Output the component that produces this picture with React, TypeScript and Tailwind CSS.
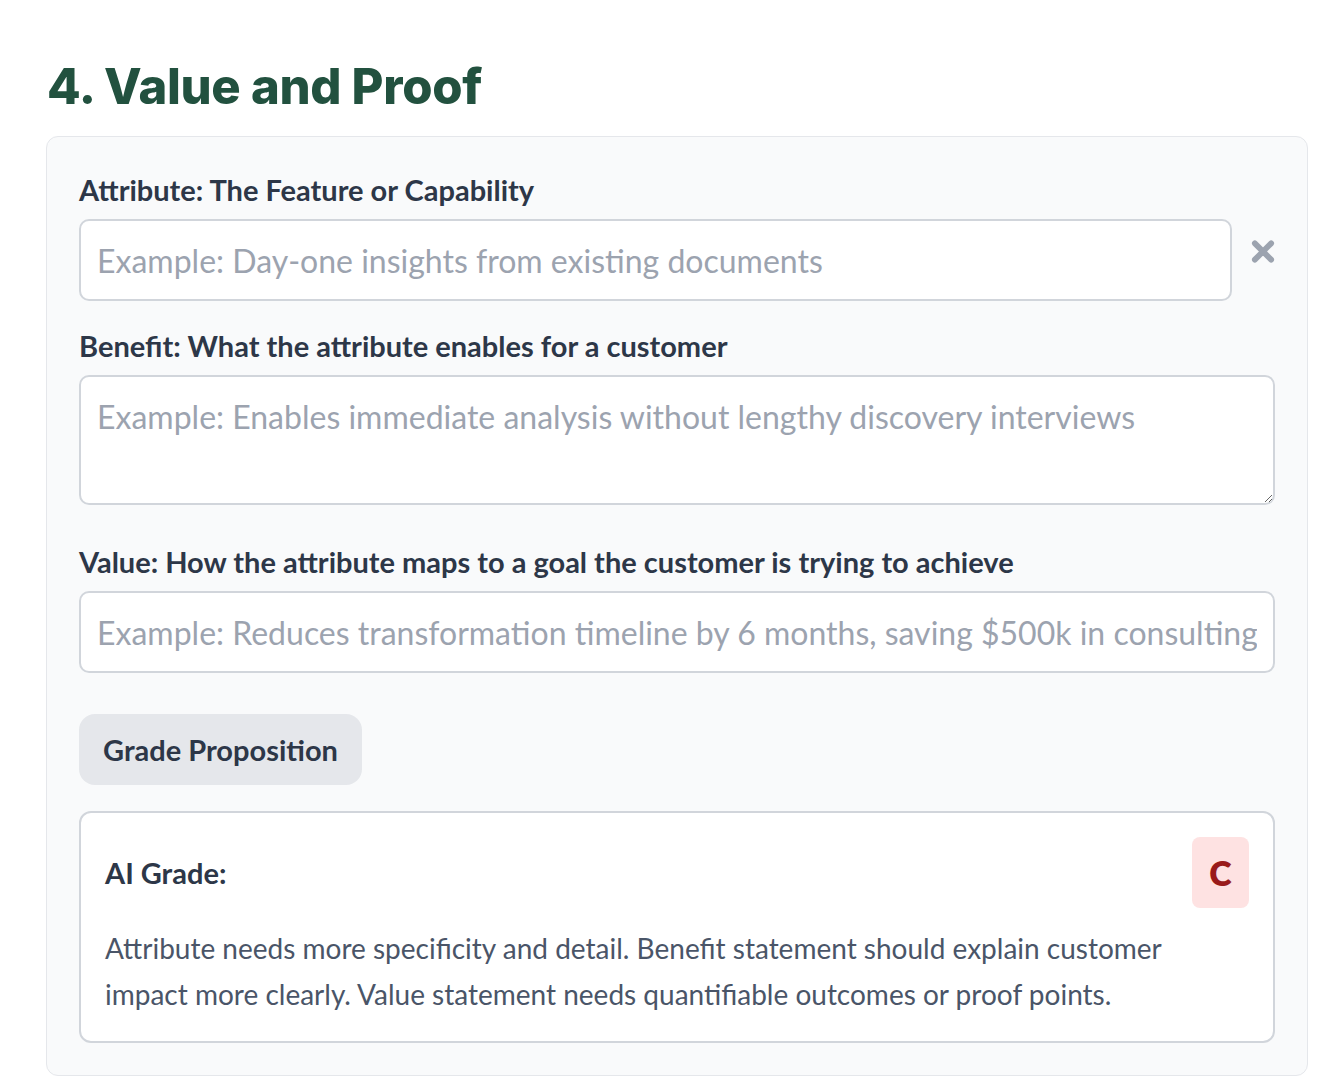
import React from 'react';

const body = { fontFamily: 'Lato, "Open Sans", sans-serif' };
const head = { fontFamily: 'Inter, "Liberation Sans", sans-serif' };

function XIcon() {
  return (
    <svg width="25" height="25" viewBox="0 0 25 25" fill="none">
      <path d="M4 4 L21 21 M21 4 L4 21" stroke="#9ca3af" strokeWidth="6" strokeLinecap="round" />
    </svg>
  );
}

export default function App() {
  return (
    <div className="min-h-screen bg-white pl-[46px] pr-[22px] pt-[55px]" style={body}>
      <h2 className="text-[49px] leading-[64px] font-extrabold text-[#22513f] mb-[17px] pl-[1px] tracking-[-0.3px]" style={head}>
        4. Value and Proof
      </h2>

      <div className="rounded-[12px] border border-[#e5e7eb] bg-[#f9fafb] px-8 pt-[33px] pb-8">
        <div className="text-[29px] leading-[40px] font-bold text-[#2d3748] mb-[9px]">
          Attribute: The Feature or Capability
        </div>
        <div className="flex items-start gap-[19px]">
          <input
            className="flex-1 h-[82px] rounded-[10px] border-2 border-[#d1d5db] bg-white px-[16px] text-[32px] text-[#2d3748] placeholder:text-[#9ca3af] outline-none"
            placeholder="Example: Day-one insights from existing documents"
          />
          <button className="mt-[20px] w-[24px] h-[25px] flex items-center justify-center">
            <XIcon />
          </button>
        </div>

        <div className="text-[29px] leading-[40px] font-bold text-[#2d3748] mt-[25px] mb-[9px]">
          Benefit: What the attribute enables for a customer
        </div>
        <textarea
          className="block w-full h-[130px] rounded-[10px] border-2 border-[#d1d5db] bg-white px-[16px] py-[18px] text-[32px] leading-[44px] text-[#2d3748] placeholder:text-[#9ca3af] outline-none"
          placeholder="Example: Enables immediate analysis without lengthy discovery interviews"
        />

        <div className="text-[29px] leading-[40px] font-bold text-[#2d3748] mt-[37px] mb-[9px]">
          Value: How the attribute maps to a goal the customer is trying to achieve
        </div>
        <input
          className="block w-full h-[82px] rounded-[10px] border-2 border-[#d1d5db] bg-white px-[16px] text-[32px] text-[#2d3748] placeholder:text-[#9ca3af] outline-none"
          placeholder="Example: Reduces transformation timeline by 6 months, saving $500k in consulting fees"
        />

        <button className="mt-[41px] h-[71px] w-[283px] rounded-[16px] bg-[#e5e7eb] text-[29px] font-bold text-[#2d3748]">
          Grade Proposition
        </button>

        <div className="mt-[26px] rounded-[12px] border-2 border-[#d1d5db] bg-white p-6">
          <div className="flex items-center justify-between">
            <div className="text-[29px] font-bold text-[#2d3748]">AI Grade:</div>
            <div className="w-[57px] h-[71px] rounded-[8px] bg-[#fee2e2] flex items-center justify-center text-[34px] font-extrabold text-[#991b1b]">
              C
            </div>
          </div>
          <p className="mt-[17px] text-[28px] leading-[46px] text-[#4a5568] max-w-[1090px]">
            Attribute needs more specificity and detail. Benefit statement should explain customer impact more clearly. Value statement needs quantifiable outcomes or proof points.
          </p>
        </div>
      </div>
    </div>
  );
}
